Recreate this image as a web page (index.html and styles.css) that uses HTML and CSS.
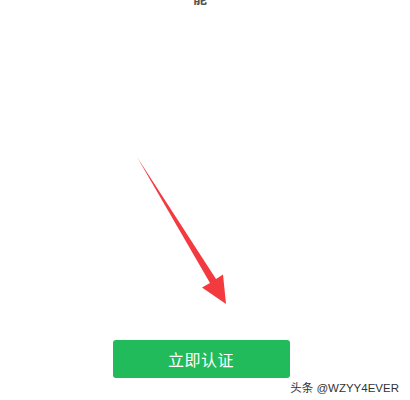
FILE: index.html
```html
<!DOCTYPE html>
<html lang="zh">
<head>
<meta charset="utf-8">
<link rel="stylesheet" href="styles.css">
</head>
<body>
<div class="page">
  <div class="top-text">能</div>
  <div class="spacer"></div>
  <button class="verify-btn">立即认证</button>
  <svg class="arrow" width="410" height="400" viewBox="0 0 410 400">
    <polygon points="137,157 216,279 223,274.5 226,304 202,287.5 210,283" fill="#f23a3f"/>
  </svg>
  <div class="watermark">头条 @WZYY4EVER</div>
</div>
</body>
</html>
```

FILE: styles.css
```css
html, body {
  margin: 0;
  padding: 0;
  background: #ffffff;
}
.page {
  position: relative;
  width: 410px;
  height: 400px;
  overflow: hidden;
  display: flex;
  flex-direction: column;
  align-items: center;
  font-family: "Liberation Sans", "Noto Sans CJK SC", sans-serif;
}
.top-text {
  margin-top: -10px;
  margin-left: -10px;
  font-size: 14px;
  line-height: 16px;
  color: #555;
  font-weight: bold;
}
.spacer {
  height: 334px;
}
.verify-btn {
  width: 177px;
  height: 38px;
  margin-left: -8px;
  border: none;
  border-radius: 3px;
  background: #21bb5b;
  color: #ffffff;
  font-family: "Noto Sans CJK SC", sans-serif;
  font-size: 16px;
  letter-spacing: 0.5px;
  padding: 0;
}
.arrow {
  position: absolute;
  left: 0;
  top: 0;
}
.watermark {
  position: absolute;
  right: 11px;
  top: 380px;
  font-family: "Liberation Sans", "Noto Sans CJK SC", sans-serif;
  font-size: 11.5px;
  line-height: 16px;
  color: #333;
}
```
